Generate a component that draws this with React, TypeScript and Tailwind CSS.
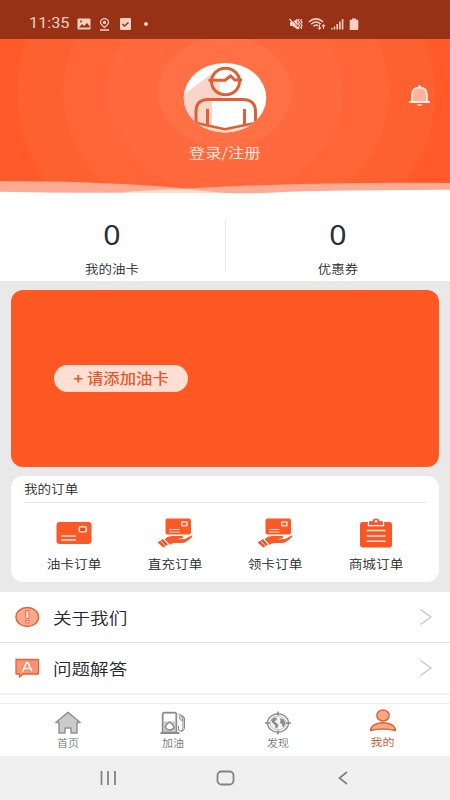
import React from "react";

function Txt({ children, className = "" }: { children: React.ReactNode; className?: string }) {
  return <span className={"block whitespace-nowrap leading-none " + className}>{children}</span>;
}

function StatusBar() {
  return (
    <div className="flex h-[39px] items-center justify-between bg-[#973216] pl-[29px] pr-[91px] pt-[9px] text-[#fbd0c2]">
      <div className="flex items-center">
        <Txt className="w-[48px] origin-left scale-x-[1.12] font-['Roboto',sans-serif] text-[14.5px] font-normal">11:35</Txt>
        <svg className="h-[12px] w-[14px]" viewBox="0 0 14 12">
          <rect x=".5" y=".5" width="13" height="11" rx="1" fill="currentColor" />
          <path d="M2 9.500L5 6l2 2 3-3 2.500 3v1.500z" fill="#973216" />
          <circle cx="4" cy="3.500" r="1" fill="#973216" />
        </svg>
        <svg className="ml-[8px] h-[13px] w-[11px]" viewBox="0 0 11 13" fill="none" stroke="currentColor" strokeWidth="1.300">
          <path d="M5.500 9.500C3 7.500 1.500 6 1.500 4.300a4 3.700 0 0 1 8 0C9.500 6 8 7.500 5.500 9.500zM1 12h9" />
          <circle cx="5.500" cy="4.500" r="1" />
        </svg>
        <svg className="ml-[10px] h-[12px] w-[11px]" viewBox="0 0 11 12">
          <rect width="11" height="12" rx="1" fill="currentColor" />
          <path d="M2.500 6l2 2L8.500 4.500" fill="none" stroke="#973216" strokeWidth="1.400" />
        </svg>
        <div className="ml-[13px] size-[4px] rounded-full bg-[#fbd0c2]" />
      </div>
      <div className="flex items-center">
        <svg className="h-[12px] w-[14px]" viewBox="0 0 14 12">
          <path d="M1 4h2.500L8.500 .5v11L3.500 8H1z" fill="currentColor" />
          <path d="M1.800 .5l8 9.500" stroke="#973216" strokeWidth=".8" />
          <path d="M.5 1l9 10M10.300 1l-1 1.500 1.200 1.600-1.200 1.700 1.200 1.700-1.200 1.700 1 1.500M12.800 1l-1 1.500L13 4.100l-1.200 1.700L13 7.500l-1.200 1.700 1 1.500" fill="none" stroke="currentColor" strokeWidth="1.200" />
        </svg>
        <svg className="ml-[5px] h-[12px] w-[18px]" viewBox="0 0 18 12" fill="none" stroke="currentColor" strokeWidth="1.500">
          <path d="M.8 4Q8-2.300 15.200 4M3.200 6.200Q8 1.800 12.700 6M5.500 8.500Q8 5.800 10.300 8" />
          <path d="M11.500 6.500v4.500m-1.500-1.500l1.500 1.700L13 9.500M15.500 11V6.800m-1.500 1.500l1.500-1.600L17 8.300" strokeWidth="1.100" />
        </svg>
        <svg className="ml-[5px] h-[12px] w-[13px]" viewBox="0 0 13 12" fill="currentColor">
          <path d="M0 10h1.600v1.500H0zM2.700 8.500h1.600v3H2.700zM5.400 6H7v5.500H5.400zM8.100 3.500h1.600v8H8.100zM10.800 1h1.600v10.500h-1.600z" />
        </svg>
        <svg className="ml-[5px] h-[12px] w-[10px]" viewBox="0 0 10 12" fill="currentColor">
          <path d="M3 .500h4v1.300h2.300V12H.7V1.800H3z" />
        </svg>
      </div>
    </div>
  );
}

function HeaderBackdrop() {
  return (
    <svg className="absolute inset-0 h-[156px] w-[450px]" viewBox="0 39 450 156">
      <rect y="39" width="450" height="156" fill="#ff5a27" />
      <ellipse cx="226" cy="92" rx="209" ry="177" fill="#ff602f" />
      <ellipse cx="226" cy="92" rx="163" ry="138" fill="#ff6536" />
      <ellipse cx="225" cy="92" rx="118" ry="102" fill="#ff693d" />
      <ellipse cx="225" cy="92" rx="67" ry="56" fill="#ff7045" />
      <path d="M0 181Q105 181 187 188.500Q300 182 450 183V195H0z" fill="#ffab93" />
      <path d="M125 192Q160 189 187 189Q215 192 232 193.500V195H125z" fill="#ffdccd" />
      <path d="M0 191.800Q75 193 125 192.800L155 193H225Q250 194 285 192Q330 190 450 189.800V195H0z" fill="#fff" />
    </svg>
  );
}

function Avatar() {
  return (
    <svg className="h-[72px] w-[84px]" viewBox="183 62 84 72">
      <defs>
        <clipPath id="face"><ellipse cx="225" cy="97.700" rx="41.300" ry="34.800" /></clipPath>
      </defs>
      <g clipPath="url(#face)">
        <rect x="183" y="62" width="84" height="72" fill="#fff" />
        <path d="M183 95L211 74L221 92V126H204L183 133z" fill="#fbd5ca" />
        <ellipse cx="225.500" cy="81.500" rx="14" ry="13.300" fill="#fff" />
        <path d="M211.500 82H220V93.500Q212 91 211.500 82z" fill="#fbe0d8" />
        <path d="M183 121L197 123L225 128.500L253 123V134H183z" fill="#fbe0cf" />
        <path d="M196 123V112Q196 99 209 99H242Q255 99 255 112V123L225 129.500z" fill="#fff" />
        <path d="M196 123V112Q196 99 209 99H212V127z" fill="#fbd5ca" />
        <g fill="none" stroke="#e05f33" strokeWidth="3">
          <ellipse cx="225.500" cy="81.500" rx="14" ry="13.300" />
          <path d="M208.500 80.300H225L230.500 76L235 80H242M196 123V112Q196 99.500 208 99.500H243Q255.500 99.500 255.500 112V123M207.500 109V125M244.500 109V125" />
          <path d="M183 120L196 123L225 129.300L255 123L267 120" strokeWidth="2.500" />
        </g>
      </g>
    </svg>
  );
}

function Bell() {
  return (
    <svg className="h-[23px] w-[23px]" viewBox="0 0 23 23">
      <path d="M4 18V11Q4 3.500 11.500 3.500T19 11v7z" fill="#ffb39c" stroke="#ffede2" strokeWidth="1.700" />
      <path d="M1 18h21" stroke="#ffede2" strokeWidth="2" />
      <path d="M10 3q0-2 1.500-2T13 3zM8.500 20.500h6q-3 3-6 0z" fill="#ffede2" />
    </svg>
  );
}

function Header() {
  return (
    <div className="relative h-[156px]">
      <HeaderBackdrop />
      <div className="relative grid grid-cols-[1fr_84px_1fr] pt-[23px]">
        <div />
        <div className="flex flex-col items-center">
          <Avatar />
          <Txt className="mt-[11px] scale-x-[1.17] text-[14px] text-[#fff1e6]">登录/注册</Txt>
        </div>
        <div className="flex justify-end pr-[19px] pt-[22px]"><Bell /></div>
      </div>
    </div>
  );
}

function Stat({ label }: { label: string }) {
  return (
    <div className="flex flex-1 flex-col items-center">
      <Txt className="scale-x-[1.08] font-['Noto_Sans',sans-serif] text-[28px] font-normal text-[#283036]">0</Txt>
      <Txt className="mt-[15px] scale-x-[1.12] text-[12px] text-[#24292c]">{label}</Txt>
    </div>
  );
}

function CardIcon() {
  return (
    <svg className="h-[32px] w-[40px]" viewBox="0 0 40 32">
      <rect x="2.500" y="6" width="35" height="22" rx="3" fill="#fb5a27" />
      <rect x="25.300" y="10.700" width="7" height="5" rx="1" fill="#e34c20" stroke="#ffe2d6" strokeWidth="1.600" />
      <path d="M7 20h15M7 24h15" stroke="#ffe2d6" strokeWidth="1.400" />
    </svg>
  );
}

function HandCardIcon() {
  return (
    <svg className="h-[32px] w-[40px]" viewBox="0 0 40 32">
      <rect x="10.500" y="2.500" width="25.500" height="16" rx="2" fill="#fb5a27" />
      <rect x="26.800" y="6" width="5" height="3.700" fill="#fb5a27" stroke="#ffe2d6" strokeWidth="1.400" />
      <path d="M14 13.500h10.500M14 16h10.500" stroke="#ffe2d6" strokeWidth="1.100" />
      <path d="M9.500 23Q13 20 17 20H27Q29 20.300 28 22L21.500 23.300L30 23L36 19.800Q38.500 19 37 21Q31 27 27 27H19Q16 27.500 14.500 29z" fill="#fb5a27" />
      <path d="M2.500 26.500L8 23L13 28.500L8.500 31.500z" fill="#ed5427" />
      <path d="M5.500 24.500L10.500 30M8.500 22.500L14 28.500" stroke="#fff" strokeWidth=".8" />
    </svg>
  );
}

function ClipIcon() {
  return (
    <svg className="h-[32px] w-[40px]" viewBox="0 0 40 32">
      <rect x="4" y="6" width="32" height="25.500" rx="3" fill="#f85624" />
      <path d="M12.500 9.500V5H16Q17 2.500 20 2.500T24 5H27.500V9.500z" fill="#f85624" stroke="#fff" strokeWidth="1.300" />
      <path d="M13.200 8.800V5.200H16.500Q17 2.500 20 2.500T23.500 5.200H26.800V8.800z" fill="#f85624" />
      <circle cx="20" cy="5.300" r="1.300" fill="#fff" />
      <path d="M10.500 14.500h19M10.500 20h19M10.500 25.300h19" stroke="#ffe6dc" strokeWidth="1.500" />
    </svg>
  );
}

function Order({ icon, label }: { icon: React.ReactNode; label: string }) {
  return (
    <div className="flex flex-col items-center">
      {icon}
      <Txt className="mt-[10px] scale-x-[1.14] text-[12px] text-[#24292c]">{label}</Txt>
    </div>
  );
}

function Chevron() {
  return (
    <svg className="h-[18px] w-[14px]" viewBox="0 0 14 18" fill="none" stroke="#c5c5c5" strokeWidth="1.300">
      <path d="M1.500 1.500L12 9L1.500 16.500" />
    </svg>
  );
}

function Row({ icon, label, last = false }: { icon: React.ReactNode; label: string; last?: boolean }) {
  return (
    <div className={"flex shrink-0 items-center pl-[14px] pr-[17px] " + (last ? "h-[52px] border-b-2 border-[#f3f3f3]" : "h-[51px] border-b border-[#e3e3e3]")}>
      {icon}
      <Txt className="ml-[13px] flex-1 origin-left scale-x-[1.16] text-[16px] text-[#24292c]">{label}</Txt>
      <Chevron />
    </div>
  );
}

function AboutIcon() {
  return (
    <svg className="h-[22px] w-[26px]" viewBox="0 0 26 22">
      <ellipse cx="13.300" cy="11" rx="11.300" ry="9.500" fill="#ffa78b" stroke="#d9663f" strokeWidth="1.400" />
      <path d="M11.600 4.500h3.400v8h-3.400zM11.600 14.500h3.400v2.500h-3.400z" fill="#ffd6c6" stroke="#d9663f" strokeWidth=".8" />
    </svg>
  );
}

function FaqIcon() {
  return (
    <svg className="h-[22px] w-[26px]" viewBox="0 0 26 22">
      <path d="M2 2.500h22.500v14.500H9L5.500 20V17H2z" fill="#ff9270" stroke="#dc663f" strokeWidth="1.300" strokeLinejoin="round" />
      <path d="M8.500 14.500L12.500 5.500h1.500l4 9M10.500 11.500h5.500" fill="none" stroke="#d9663f" strokeWidth="3" />
      <path d="M8.500 14.500L12.500 5.500h1.500l4 9M10.500 11.500h5.500" fill="none" stroke="#ffede5" strokeWidth="2" />
    </svg>
  );
}

function HomeIcon() {
  return (
    <svg className="h-[26px] w-[28px]" viewBox="0 0 28 26">
      <path d="M14 2.300L1.800 12.500H5V23h6v-5h6v5h6V12.500h3.200z" fill="#cbcbcb" stroke="#929292" strokeWidth="1.500" strokeLinejoin="round" />
    </svg>
  );
}

function FuelIcon() {
  return (
    <svg className="h-[26px] w-[28px]" viewBox="0 0 28 26" fill="none" stroke="#8b8b8b" strokeWidth="1.400">
      <path d="M3.500 22.500V4.500Q3.500 2.500 5.500 2.500H15.500Q17.500 2.500 17.500 4.500V22.500z" fill="#c9c9c9" />
      <path d="M5 4h11v7.500H5z" fill="#fff" stroke="none" />
      <path d="M10.500 12Q6 15.500 6.500 17.700Q8 20 10.500 20T15 17.700Q15 15.500 10.500 12z" fill="#fff" />
      <path d="M1.500 23h19" strokeWidth="2" />
      <path d="M19.500 4L24 6V18Q24 21 21.500 21T19.500 18V16M24 6L25.500 8V18.500Q24.500 21.500 22 21.500" strokeWidth="1" />
      <path d="M20.500 6h3v5l-3-2z" fill="#ddd" strokeWidth=".8" />
    </svg>
  );
}

function DiscoverIcon() {
  return (
    <svg className="h-[26px] w-[28px]" viewBox="0 0 28 26">
      <ellipse cx="14" cy="13" rx="10.500" ry="9.300" fill="#fff" stroke="#909090" strokeWidth="1.400" />
      <ellipse cx="14" cy="13" rx="8" ry="7" fill="#f3f3f3" stroke="#a8a8a8" strokeWidth=".7" />
      <path d="M14 1.500v4M14 20.500v4M1 13h5M22 13h5" stroke="#8b8b8b" strokeWidth="1.500" />
      <path d="M7 10l3-2.500 3 .5-.5 2-2 1.500 2.500 2 1.500 1.500-1.500 3.500-1.500-.5-.5-3-2.500-2zM16 8l4 1.500 1.500 4-1.500 3-1.500.500-.5-3-2-1 .500-2.500z" fill="#8d8d8d" />
    </svg>
  );
}

function MineIcon() {
  return (
    <svg className="h-[26px] w-[28px]" viewBox="0 0 28 26" fill="#ffa883" stroke="#d96435" strokeWidth="1.400">
      <ellipse cx="14" cy="7.500" rx="6.200" ry="5.500" />
      <path d="M1.500 22.500Q2 17 9 15.500Q14 14 19 15.500Q26 17 26.500 22.500Q14 19.500 1.500 22.500z" strokeLinejoin="round" />
    </svg>
  );
}

function Tab({ icon, label, active = false }: { icon: React.ReactNode; label: string; active?: boolean }) {
  return (
    <div className="flex flex-1 flex-col items-center pt-[5px]">
      <div className={active ? "-mt-[1px]" : "mt-[1px]"}>{icon}</div>
      <Txt className={active ? "mt-[3px] scale-x-[1.14] text-[10.500px] text-[#c9521f]" : "mt-[2px] scale-x-[1.1] text-[10px] text-[#757575]"}>{label}</Txt>
    </div>
  );
}

export default function App() {
  return (
    <div className="flex h-[800px] w-[450px] flex-col overflow-hidden bg-white font-['Noto_Sans_CJK_SC',sans-serif] font-[350]">
      <StatusBar />
      <Header />
      <div className="flex h-[86px] items-start">
        <div className="flex flex-1 pt-[25px]"><Stat label="我的油卡" /></div>
        <div className="mt-[24px] h-[53px] w-px bg-[#e9e9e9]" />
        <div className="flex flex-1 pt-[25px]"><Stat label="优惠券" /></div>
      </div>
      <div className="flex h-[311px] flex-col gap-[9px] bg-[#e9e9e9] px-[11px] pt-[9px]">
        <div className="h-[177px] rounded-[12px] bg-[#ff5823] pl-[43px] pt-[75px]">
          <div className="flex h-[27px] w-[134px] items-center justify-center rounded-full bg-[#ffdfd4]">
            <Txt className="scale-x-[1.13] text-[14.500px] font-medium text-[#df5a2c]"><b>+</b> 请添加油卡</Txt>
          </div>
        </div>
        <div className="h-[106px] rounded-[12px] bg-white px-[13px]">
          <div className="flex h-[27px] items-center border-b border-[#e2e2e2]">
            <Txt className="origin-left scale-x-[1.13] text-[12px] text-[#24292c]">我的订单</Txt>
          </div>
          <div className="grid grid-cols-4 pt-[13px]">
            <Order icon={<CardIcon />} label="油卡订单" />
            <Order icon={<HandCardIcon />} label="直充订单" />
            <Order icon={<HandCardIcon />} label="领卡订单" />
            <Order icon={<ClipIcon />} label="商城订单" />
          </div>
        </div>
      </div>
      <div className="flex h-[111px] flex-col overflow-hidden">
        <Row icon={<AboutIcon />} label="关于我们" />
        <Row icon={<FaqIcon />} label="问题解答" last />
      </div>
      <div className="flex h-[53px] border-t border-[#efefef] px-[15px]">
        <Tab icon={<HomeIcon />} label="首页" />
        <Tab icon={<FuelIcon />} label="加油" />
        <Tab icon={<DiscoverIcon />} label="发现" />
        <Tab icon={<MineIcon />} label="我的" active />
      </div>
      <div className="flex h-[44px] items-center bg-[#f0f0f0] pl-[100px]">
        <svg className="h-[16px] w-[18px]" viewBox="0 0 18 16" stroke="#828282" strokeWidth="1.800">
          <path d="M1.500 1v14M8 1v14M15 1v14" />
        </svg>
        <svg className="ml-[98px] h-[16px] w-[20px]" viewBox="0 0 20 16" fill="none" stroke="#828282" strokeWidth="1.800">
          <rect x="1.500" y="1.500" width="16" height="13" rx="4" />
        </svg>
        <svg className="ml-[101px] h-[16px] w-[12px]" viewBox="0 0 12 16" fill="none" stroke="#828282" strokeWidth="1.800">
          <path d="M10 2L2.500 8L10 14" />
        </svg>
      </div>
    </div>
  );
}
